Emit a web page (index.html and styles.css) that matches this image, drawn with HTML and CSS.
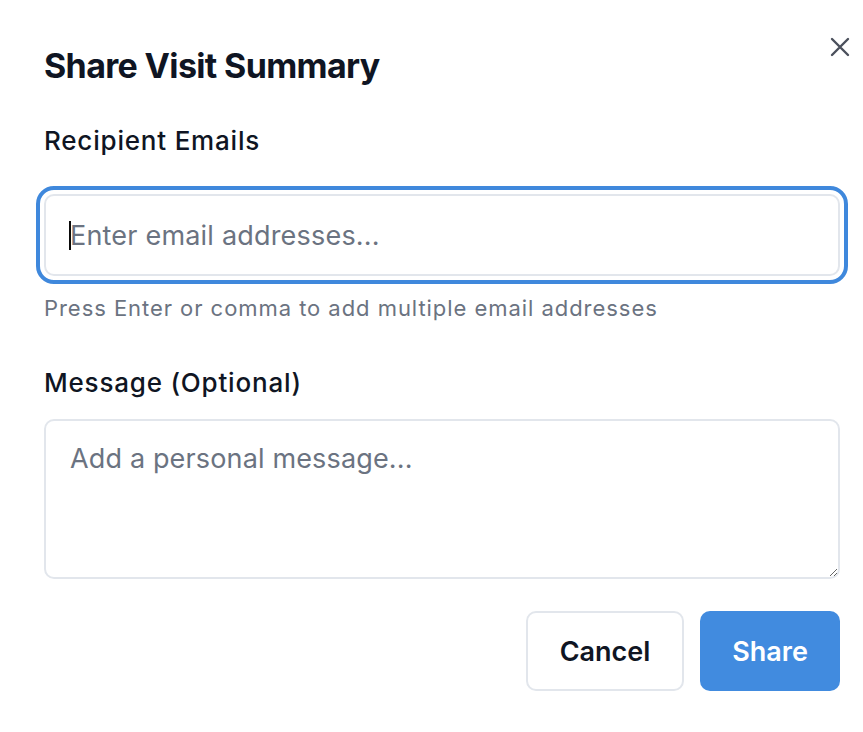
FILE: index.html
```html
<!DOCTYPE html>
<html>
<head>
<meta charset="utf-8">
<link rel="stylesheet" href="styles.css">
</head>
<body>
<div class="dialog">
  <button class="close" aria-label="Close">
    <svg width="20" height="20" viewBox="0 0 20 20"><path d="M2 2 L18 18 M18 2 L2 18" stroke="#4b505c" stroke-width="2.4" stroke-linecap="round" fill="none"/></svg>
  </button>
  <h2 class="title">Share Visit Summary</h2>
  <label class="label">Recipient Emails</label>
  <div class="input-wrap">
    <input class="input focused" type="text" placeholder="Enter email addresses...">
    <span class="caret"></span>
  </div>
  <p class="help">Press Enter or comma to add multiple email addresses</p>
  <label class="label label-msg">Message (Optional)</label>
  <textarea class="textarea" placeholder="Add a personal message..."></textarea>
  <div class="actions">
    <button class="btn btn-cancel">Cancel</button>
    <button class="btn btn-share">Share</button>
  </div>
</div>
</body>
</html>
```
FILE: styles.css
```css
html, body {
  margin: 0;
  padding: 0;
  background: #ffffff;
}
body {
  font-family: Inter, "Noto Sans", sans-serif;
  color: #0f1523;
}
.dialog {
  position: relative;
  width: 863px;
  height: 732px;
  box-sizing: border-box;
  padding: 44px 23px 0 44px;
  display: flex;
  flex-direction: column;
}
.close {
  position: absolute;
  top: 37px;
  left: 830px;
  width: 20px;
  height: 20px;
  padding: 0;
  border: 0;
  background: transparent;
  display: flex;
}
.title {
  margin: 0;
  font-size: 34px;
  font-weight: 700;
  line-height: 44px;
  letter-spacing: -0.65px;
  color: #0f1523;
}
.label {
  display: block;
  margin-top: 33px;
  font-size: 26px;
  font-weight: 500;
  line-height: 40px;
  letter-spacing: 0.8px;
  color: #0f1523;
}
.input-wrap {
  position: relative;
  margin-top: 33px;
  width: 796px;
  height: 82px;
}
.input {
  display: block;
  box-sizing: border-box;
  width: 796px;
  height: 82px;
  border: 2px solid #e2e6ec;
  border-radius: 10px;
  padding: 0 24px 0 24px;
  font-family: Inter, "Noto Sans", sans-serif;
  font-size: 27px;
  letter-spacing: 0.2px;
  color: #0f1523;
  caret-color: #000;
  background: #fff;
}
.input.focused,
.input:focus {
  outline: 4px solid #3f88dc;
  outline-offset: 4px;
}
.caret {
  position: absolute;
  left: 25px;
  top: 27px;
  width: 2px;
  height: 29px;
  background: #0a0a0a;
}
.input::placeholder,
.textarea::placeholder {
  color: #6b7381;
  opacity: 1;
}
.help {
  margin: 17px 0 0;
  font-size: 22px;
  line-height: 30px;
  letter-spacing: 0.95px;
  color: #6b7381;
}
.label-msg {
  margin-top: 40px;
}
.textarea {
  margin-top: 16px;
  box-sizing: border-box;
  width: 796px;
  height: 160px;
  border: 2px solid #e2e6ec;
  border-radius: 10px;
  padding: 20px 24px;
  font-family: Inter, "Noto Sans", sans-serif;
  font-size: 27px;
  letter-spacing: 0.15px;
  line-height: 36px;
  color: #0f1523;
  resize: vertical;
  outline: none;
}
.actions {
  margin-top: 32px;
  display: flex;
  justify-content: flex-end;
  gap: 16px;
  width: 796px;
}
.btn {
  height: 80px;
  border-radius: 10px;
  font-family: Inter, "Noto Sans", sans-serif;
  font-size: 27px;
  font-weight: 600;
  padding: 0;
  box-sizing: border-box;
}
.btn-cancel {
  width: 158px;
  background: #fff;
  border: 2px solid #e2e6ec;
  color: #0f1523;
}
.btn-share {
  width: 140px;
  background: #418bdf;
  border: 0;
  color: #fff;
}
```
